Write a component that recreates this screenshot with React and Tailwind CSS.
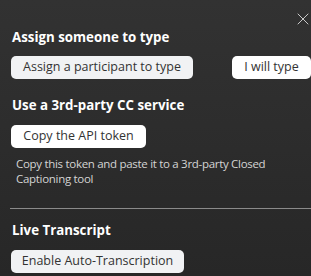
import { X } from 'lucide-react';

const font = { fontFamily: '"Open Sans", "Noto Sans", sans-serif' };

const Btn = ({ children, light, w }) => (
  <button
    className={`${w} h-[23px] rounded-[5px] text-[12.5px] leading-none text-[#333] flex items-center justify-center ${light ? 'bg-[#f1f2f4]' : 'bg-white'}`}
  >
    {children}
  </button>
);

export default function App() {
  return (
    <div
      className="w-[311px] h-[276px] bg-gradient-to-b from-[#323232] to-[#272727] text-white relative overflow-hidden"
      style={font}
    >
      <button className="absolute top-[9px] left-[293px] text-[#d8d8d8]">
        <X size={20} strokeWidth={1.1} />
      </button>

      <div className="pt-[29px] pl-[11px]">
        <h2 className="text-[13.3px] font-bold leading-[16px] pl-[1px]">Assign someone to type</h2>
        <div className="mt-[11px] flex justify-between">
          <Btn light w="w-[182px]">Assign a participant to type</Btn>
          <Btn w="w-[79px]">I will type</Btn>
        </div>

        <h2 className="mt-[18px] text-[13.3px] font-bold leading-[16px] pl-[1px]">Use a 3rd-party CC service</h2>
        <div className="mt-[12px]">
          <Btn w="w-[135px] h-[22px]">Copy the API token</Btn>
        </div>
        <p className="mt-[8px] pl-[5px] pr-[40px] text-[11.5px] leading-[15px] text-[#d4d4d4] tracking-[-0.3px]">
          Copy this token and paste it to a 3rd-party Closed Captioning tool
        </p>
      </div>

      <div className="mt-[22px] ml-[10px] h-px bg-[#8a8a8a]" />

      <div className="pl-[11px]">
        <h2 className="mt-[13px] text-[13.3px] font-bold leading-[16px] pl-[1px]">Live Transcript</h2>
        <div className="mt-[12px]">
          <Btn light w="w-[173px]">Enable Auto-Transcription</Btn>
        </div>
      </div>
    </div>
  );
}
